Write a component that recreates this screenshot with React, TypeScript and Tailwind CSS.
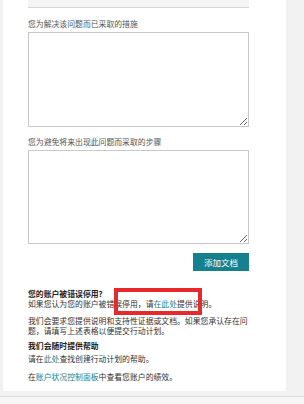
const font = { fontFamily: '"Noto Sans CJK SC", "Noto Sans", sans-serif' };

const Link = ({ children }: { children: React.ReactNode }) => (
  <a href="#" className="text-[#1a7f8e] no-underline">
    {children}
  </a>
);

const App = () => {
  return (
    <div
      className="relative w-[304px] h-[404px] overflow-hidden bg-[#f2f2f2] flex flex-col"
      style={font}
    >
      <div className="ml-[3px] w-[283px] h-[391px] bg-white pl-[25px] pr-[37px] flex flex-col text-[7.85px] leading-[10px] text-[#333]">
        <div className="h-[8px] bg-[#f4f4f4] border-b border-[#d6d6d6]" />

        <label className="mt-[11px] text-[#555]">您为解决该问题而已采取的措施</label>
        <textarea className="mt-[3px] h-[95px] w-full border border-[#c9c9c9] rounded-none resize-y outline-none" />

        <label className="mt-[10px] text-[#555]">您为避免将来出现此问题而采取的步骤</label>
        <textarea className="mt-[3px] h-[94px] w-full border border-[#c9c9c9] rounded-none resize-y outline-none" />

        <button className="mt-[9px] self-end w-[56px] h-[18px] bg-[#17808f] text-white text-[8.5px] leading-[18px]">
          添加文档
        </button>

        <div className="mt-[18px] font-bold text-[#222]">您的账户被错误停用?</div>
        <p>
          如果您认为您的账户被错误停用，请<Link>在此处</Link>提供说明。
        </p>

        <p className="mt-[7px] leading-[9.5px]">
          我们会要求您提供说明和支持性证据或文档。如果您承认存在问
          <br />
          题，请填写上述表格以便提交行动计划。
        </p>

        <div className="mt-[6px] font-bold text-[#222]">我们会随时提供帮助</div>
        <p className="mt-[3px]">
          请在<Link>此处</Link>查找创建行动计划的帮助。
        </p>
        <p className="mt-[8px]">
          在<Link>账户状况控制面板</Link>中查看您账户的绩效。
        </p>
      </div>
      <div className="h-[5px]" />
      <div className="flex-1 border-t border-[#dcdcdc] bg-[#f7f7f7]" />

      <div className="absolute left-[114px] top-[288px] w-[88px] h-[27px] border-[4px] border-[#e8282b]" />
    </div>
  );
};

export default App;
